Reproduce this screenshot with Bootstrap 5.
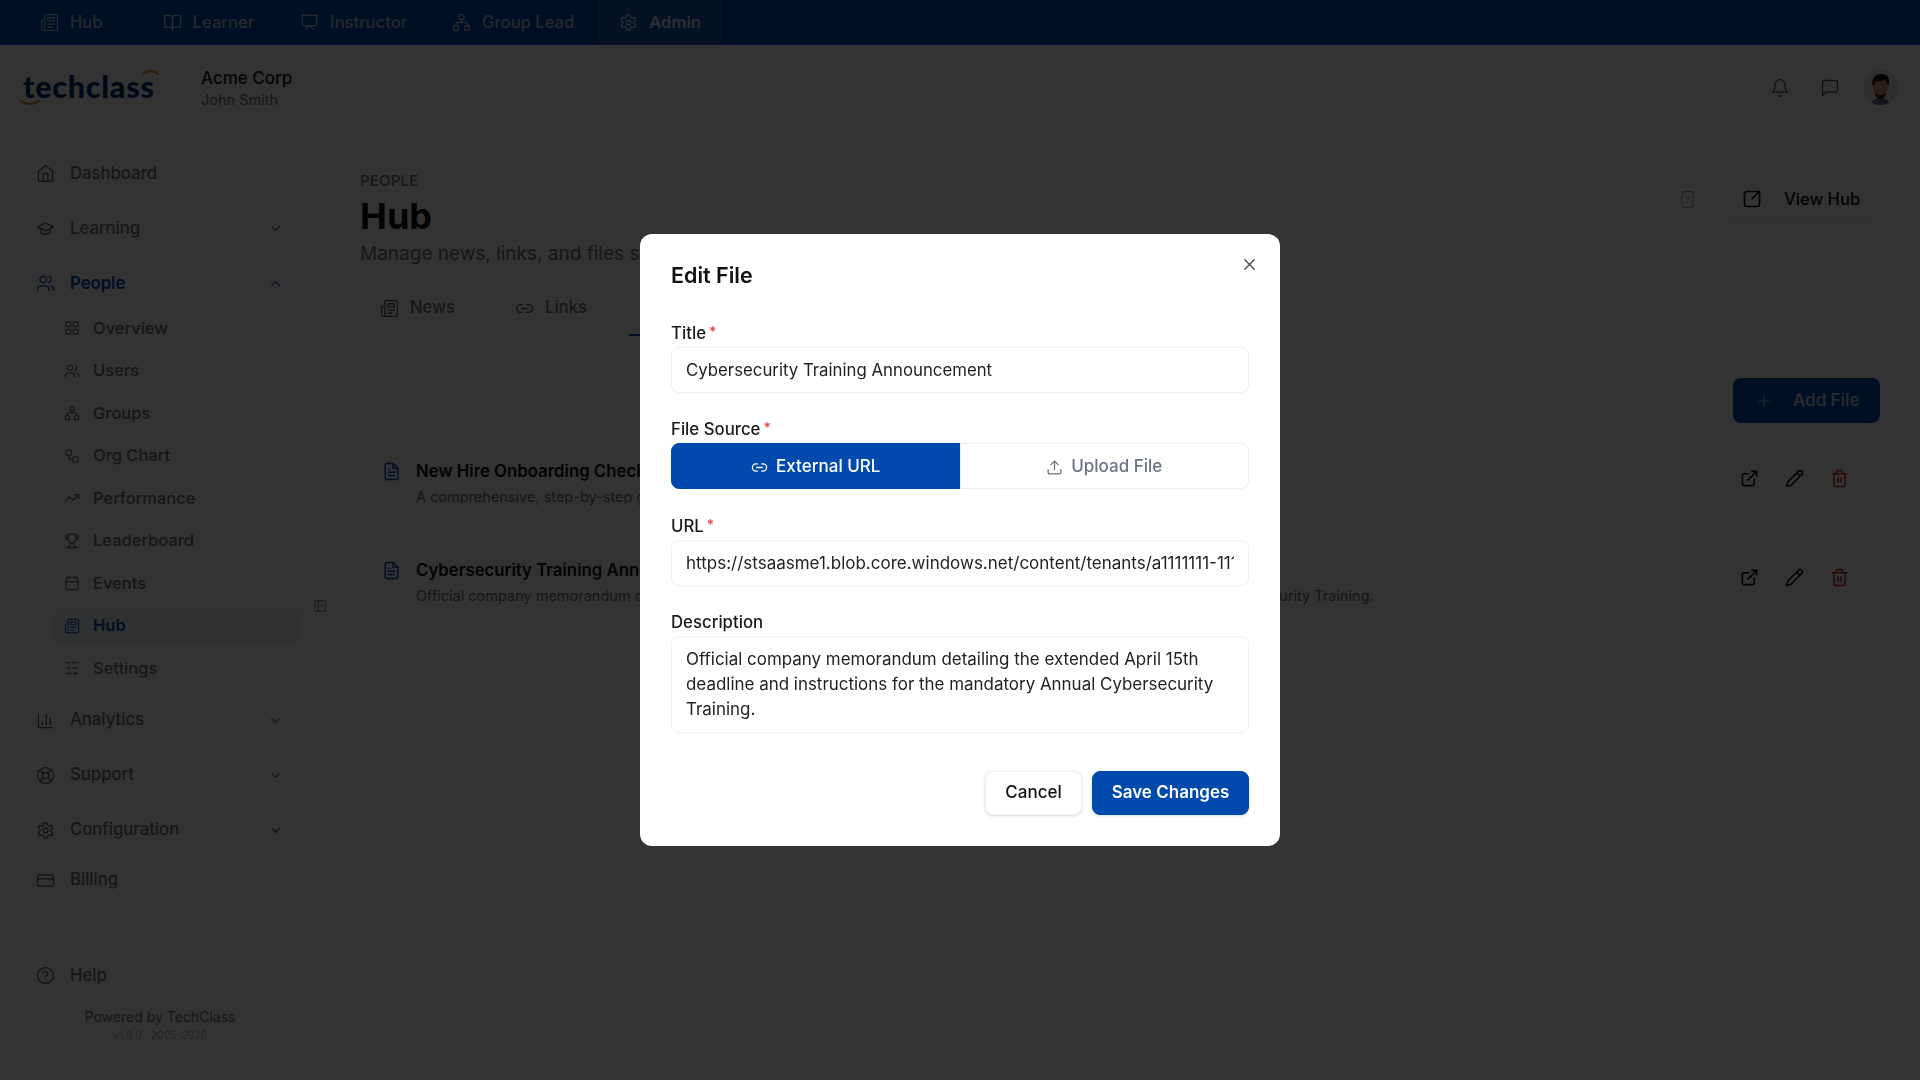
<!DOCTYPE html>
<html lang="en">
<head>
<meta charset="utf-8">
<title>Hub</title>
<link href="https://cdn.jsdelivr.net/npm/bootstrap@5.3.0/dist/css/bootstrap.min.css" rel="stylesheet">
<style>
:root{--brand:#004aad;--muted:#6b7280;--ink:#111827;}
html,body{height:100%;}
body{font-family:Inter,"Liberation Sans",sans-serif;background:#fff;color:var(--ink);overflow:hidden;font-size:16px;}
.ic{width:1em;height:1em;fill:none;stroke:currentColor;stroke-width:2;stroke-linecap:round;stroke-linejoin:round;flex:none;}
.app-shell{height:100vh;}
.topbar{height:45px;background:var(--brand);color:#fff;padding-left:19px;}
.topitem{height:45px;padding:0 21px;gap:11px;color:rgba(255,255,255,.72);font-weight:500;font-size:16.6px;white-space:nowrap;}
.topitem .ic{font-size:19px;stroke-width:1.6;}
.topitem.on{background:rgba(255,255,255,.1);color:rgba(255,255,255,.85);font-weight:600;}
.hdr{height:105px;padding:0 22px 20px 22px;}
.logo-wrap{width:179px;height:45px;position:relative;}
.logo-text{font-family:Lato,sans-serif;font-weight:900;font-size:30.5px;line-height:32px;color:#00317a;letter-spacing:.75px;display:block;margin-left:1px;margin-top:5px;}
.logo-swash{position:absolute;}
.org-block{margin-top:2px;}
.org-name{font-weight:500;font-size:17px;line-height:22px;color:var(--ink);}
.org-user{font-size:14.5px;line-height:20px;color:var(--muted);margin-top:1px;}
.hdr-ic{font-size:20px;color:#4b5563;stroke-width:1.6;}
.hdr-tools{gap:30px;}
.avatar-svg{width:35px;height:35px;border-radius:50%;flex:none;margin-left:-7px;}
.sidebar{width:360px;flex:none;position:relative;padding:1px 0 0 36px;height:930px;}
.sideinner{width:264px;}
.sitem{height:45px;margin-bottom:10px;gap:15px;color:var(--muted);font-size:16.7px;font-weight:500;}
.sitem .ic.lead{font-size:19px;stroke-width:1.6;color:#4b5563;}
.sitem .chev{font-size:15px;margin-left:auto;margin-right:17px;color:#4b5563;}
.sitem.open{color:var(--brand);font-weight:600;}
.sitem.open .ic{color:var(--brand);}
.subl{margin:1px 0 8px 17px;width:247px;}
.subitem{height:42.5px;padding-left:11px;gap:13px;color:var(--muted);font-size:16.5px;font-weight:500;border-radius:8px;}
.subitem .ic{font-size:16px;stroke-width:1.6;color:#4b5563;}
.subitem.on{background:#f1f5f9;color:var(--brand);font-weight:600;height:38px;margin:2.25px 0;}
.subitem.on .ic{color:var(--brand);}
.short{height:35px;}
.helpitem{position:absolute;left:36px;top:803px;width:264px;}
.foot-txt{position:absolute;left:36px;width:248px;top:857px;text-align:center;color:var(--muted);font-size:14px;line-height:20px;}
.foot-ver{font-size:10.5px;line-height:18px;color:#a8afba;}
.collapse-tg{position:absolute;left:313px;top:449px;font-size:14px;color:#6b7280;stroke-width:1.6;}
.mainc{flex:1;padding:21px 40px 0 0;min-width:0;}
.eyebrow{font-size:15px;line-height:20px;color:var(--muted);font-weight:500;letter-spacing:.2px;}
.ptitle{font-size:36px;font-weight:700;line-height:44px;margin:3px 0 2px;color:#111;}
.psub{font-size:19px;line-height:27px;color:var(--muted);}
.head-help{font-size:19px;color:#9ca3af;stroke-width:1.4;margin-right:27px;}
.viewbtn{width:156px;height:40px;border:1px solid #f3f4f6;border-radius:8px;background:#fff;color:#111;font-weight:500;font-size:16.6px;gap:22px;padding:0 0 0 17px;margin-top:8px;box-shadow:0 1px 3px rgba(0,0,0,.06);}
.viewbtn .ic{font-size:20px;stroke-width:2;}
.tabrow{height:56px;margin-top:13px;}
.tabcell{height:56px;color:var(--muted);font-size:16.7px;font-weight:500;gap:11px;padding:0 20px;}
.tabcell .ic{font-size:19px;stroke-width:1.6;color:#4b5563;}
.tabcell.on{color:var(--brand);border-bottom:2px solid var(--brand);}
.addbtn{width:147px;height:45px;background:var(--brand);color:#fff;border-radius:8px;border:0;font-size:17px;font-weight:600;gap:20px;padding:0 0 0 22px;margin-top:42px;}
.addbtn .ic{font-size:18px;opacity:.7;stroke-width:1.6;}
.addbtn span{opacity:.75;}
.filerow{height:99px;padding:20px 31px 0 22px;gap:15px;}
.filelist{margin-top:16px;}
.doc-ic{font-size:19px;color:var(--brand);stroke-width:1.8;margin-top:3px;}
.file-t{font-weight:600;font-size:16.8px;line-height:24px;color:#111;}
.file-d{font-size:14.5px;line-height:21px;color:var(--muted);margin-top:3px;white-space:nowrap;}
.acts{gap:26px;margin-top:10px;}
.acts .ic{font-size:19px;color:#111;}
.acts .ic.del{color:#dc2626;}
.modal-backdrop.show{opacity:.8;}
.dlg{--bs-modal-width:640px;max-width:640px;}
.dlg .modal-content{border:0;border-radius:12px;padding:26px 31px 31px;height:612px;color:#111;}
.m-title{font-size:21.5px;font-weight:600;line-height:30px;margin:0 0 30px;color:#111;}
.m-close{position:absolute;right:21px;top:21px;background:none;border:0;padding:0;line-height:0;color:#374151;font-size:19px;}
.m-close .ic{stroke-width:1.6;}
.flabel{font-size:16.8px;font-weight:500;line-height:24px;margin:0 0 2px;display:block;color:#1a1a1a;}
.req{color:#ef4444;margin-left:3px;font-size:14px;vertical-align:2px;}
.m-group{margin-bottom:24px;}
.m-group.tight{margin-bottom:23px;}
.m-input.form-control{height:46px;border:1px solid #eef0f3;border-radius:8px;padding:0 14px;font-size:16.8px;color:#222;box-shadow:none;}
.m-input.url-val{font-size:17px;}
.m-area.form-control{height:97px;border:1px solid #eef0f3;border-radius:8px;padding:10px 14px 8px;font-size:16.95px;line-height:25px;color:#222;resize:none;overflow:hidden;box-shadow:none;}
.seg{height:46px;}
.seg .btn{height:46px;border-radius:8px;font-size:17px;font-weight:500;display:flex;align-items:center;justify-content:center;gap:8px;flex:1 1 50%;padding-top:8px;padding-bottom:6px;}
.seg .btn .ic{font-size:17px;stroke-width:1.8;}
.seg-on.btn{background:var(--brand);border:1px solid var(--brand);color:#fff;}
.seg-off.btn{background:#fff;border:1px solid #eef0f3;color:#6b7280;}
.m-actions{margin-top:38px;gap:10px;}
.btn-cancel.btn{width:97px;height:44px;background:#fff;border:1px solid #f0f1f3;border-radius:8px;color:#111;font-size:17px;font-weight:500;box-shadow:0 1px 3px rgba(0,0,0,.15);padding:0;}
.btn-save.btn{width:157px;height:44px;background:var(--brand);border:1px solid var(--brand);border-radius:8px;color:#fff;font-size:17px;font-weight:600;box-shadow:0 1px 3px rgba(0,0,0,.15);padding:0;}
</style>
</head>
<body>
<svg width="0" height="0" class="position-absolute">
<defs>
<symbol id="i-news" viewBox="0 0 24 24"><path d="M4 22h16a2 2 0 0 0 2-2V4a2 2 0 0 0-2-2H8a2 2 0 0 0-2 2v16a2 2 0 0 1-2 2Zm0 0a2 2 0 0 1-2-2v-9c0-1.1.9-2 2-2h2"/><path d="M18 14h-8"/><path d="M15 18h-5"/><path d="M10 6h8v4h-8V6Z"/></symbol>
<symbol id="i-book" viewBox="0 0 24 24"><path d="M2 3h6a4 4 0 0 1 4 4v14a3 3 0 0 0-3-3H2z"/><path d="M22 3h-6a4 4 0 0 0-4 4v14a3 3 0 0 1 3-3h7z"/></symbol>
<symbol id="i-pres" viewBox="0 0 24 24"><path d="M2 3h20"/><path d="M21 3v11a2 2 0 0 1-2 2H5a2 2 0 0 1-2-2V3"/><path d="m7 21 5-5 5 5"/></symbol>
<symbol id="i-net" viewBox="0 0 24 24"><rect x="16" y="16" width="6" height="6" rx="1"/><rect x="2" y="16" width="6" height="6" rx="1"/><rect x="9" y="2" width="6" height="6" rx="1"/><path d="M5 16v-3a1 1 0 0 1 1-1h12a1 1 0 0 1 1 1v3"/><path d="M12 12V8"/></symbol>
<symbol id="i-gear" viewBox="0 0 24 24"><path d="M12.22 2h-.44a2 2 0 0 0-2 2v.18a2 2 0 0 1-1 1.73l-.43.25a2 2 0 0 1-2 0l-.15-.08a2 2 0 0 0-2.73.73l-.22.38a2 2 0 0 0 .73 2.73l.15.1a2 2 0 0 1 1 1.72v.51a2 2 0 0 1-1 1.74l-.15.09a2 2 0 0 0-.73 2.73l.22.38a2 2 0 0 0 2.73.73l.15-.08a2 2 0 0 1 2 0l.43.25a2 2 0 0 1 1 1.73V20a2 2 0 0 0 2 2h.44a2 2 0 0 0 2-2v-.18a2 2 0 0 1 1-1.73l.43-.25a2 2 0 0 1 2 0l.15.08a2 2 0 0 0 2.73-.73l.22-.39a2 2 0 0 0-.73-2.73l-.15-.08a2 2 0 0 1-1-1.74v-.5a2 2 0 0 1 1-1.74l.15-.09a2 2 0 0 0 .73-2.73l-.22-.38a2 2 0 0 0-2.73-.73l-.15.08a2 2 0 0 1-2 0l-.43-.25a2 2 0 0 1-1-1.73V4a2 2 0 0 0-2-2z"/><circle cx="12" cy="12" r="3"/></symbol>
<symbol id="i-home" viewBox="0 0 24 24"><path d="m3 9 9-7 9 7v11a2 2 0 0 1-2 2H5a2 2 0 0 1-2-2z"/><path d="M9 22V12h6v10"/></symbol>
<symbol id="i-cap" viewBox="0 0 24 24"><path d="M22 10 12 5 2 10l10 5 10-5z"/><path d="M6 12v5c3 3 9 3 12 0v-5"/></symbol>
<symbol id="i-users" viewBox="0 0 24 24"><path d="M16 21v-2a4 4 0 0 0-4-4H6a4 4 0 0 0-4 4v2"/><circle cx="9" cy="7" r="4"/><path d="M22 21v-2a4 4 0 0 0-3-3.87"/><path d="M16 3.13a4 4 0 0 1 0 7.75"/></symbol>
<symbol id="i-grid" viewBox="0 0 24 24"><rect x="3" y="3" width="7" height="7" rx="1"/><rect x="14" y="3" width="7" height="7" rx="1"/><rect x="14" y="14" width="7" height="7" rx="1"/><rect x="3" y="14" width="7" height="7" rx="1"/></symbol>
<symbol id="i-flow" viewBox="0 0 24 24"><rect x="3" y="3" width="8" height="8" rx="2"/><path d="M7 11v4a2 2 0 0 0 2 2h4"/><rect x="13" y="13" width="8" height="8" rx="2"/></symbol>
<symbol id="i-trend" viewBox="0 0 24 24"><path d="m22 7-8.5 8.5-5-5L2 17"/><path d="M16 7h6v6"/></symbol>
<symbol id="i-trophy" viewBox="0 0 24 24"><path d="M6 9H4.5a2.5 2.5 0 0 1 0-5H6"/><path d="M18 9h1.5a2.5 2.5 0 0 0 0-5H18"/><path d="M4 22h16"/><path d="M10 14.66V17c0 .55-.47.98-.97 1.21C7.85 18.75 7 20.24 7 22"/><path d="M14 14.66V17c0 .55.47.98.97 1.21C16.15 18.75 17 20.24 17 22"/><path d="M18 2H6v7a6 6 0 0 0 12 0V2Z"/></symbol>
<symbol id="i-cal" viewBox="0 0 24 24"><rect x="3" y="4" width="18" height="18" rx="2"/><path d="M16 2v4"/><path d="M8 2v4"/><path d="M3 10h18"/></symbol>
<symbol id="i-sliders" viewBox="0 0 24 24"><path d="M21 4h-7"/><path d="M10 4H3"/><path d="M21 12h-9"/><path d="M8 12H3"/><path d="M21 20h-5"/><path d="M12 20H3"/><path d="M14 2v4"/><path d="M8 10v4"/><path d="M16 18v4"/></symbol>
<symbol id="i-bars" viewBox="0 0 24 24"><path d="M3 3v18h18"/><path d="M18 17V9"/><path d="M13 17V5"/><path d="M8 17v-3"/></symbol>
<symbol id="i-buoy" viewBox="0 0 24 24"><circle cx="12" cy="12" r="10"/><circle cx="12" cy="12" r="4"/><path d="m4.93 4.93 4.24 4.24"/><path d="m14.83 9.17 4.24-4.24"/><path d="m14.83 14.83 4.24 4.24"/><path d="m9.17 14.83-4.24 4.24"/></symbol>
<symbol id="i-card" viewBox="0 0 24 24"><rect x="2" y="5" width="20" height="14" rx="2"/><path d="M2 10h20"/></symbol>
<symbol id="i-help" viewBox="0 0 24 24"><circle cx="12" cy="12" r="10"/><path d="M9.09 9a3 3 0 0 1 5.83 1c0 2-3 3-3 3"/><path d="M12 17h.01"/></symbol>
<symbol id="i-down" viewBox="0 0 24 24"><path d="m6 9 6 6 6-6"/></symbol>
<symbol id="i-up" viewBox="0 0 24 24"><path d="m18 15-6-6-6 6"/></symbol>
<symbol id="i-panel" viewBox="0 0 24 24"><rect x="3" y="3" width="18" height="18" rx="1"/><path d="M9 3v18"/><path d="m16 9-3 3 3 3"/></symbol>
<symbol id="i-bell" viewBox="0 0 24 24"><path d="M6 8a6 6 0 0 1 12 0c0 7 3 9 3 9H3s3-2 3-9"/><path d="M10.3 21a1.94 1.94 0 0 0 3.4 0"/></symbol>
<symbol id="i-msg" viewBox="0 0 24 24"><path d="M21 15a2 2 0 0 1-2 2H7l-4 4V5a2 2 0 0 1 2-2h14a2 2 0 0 1 2 2z"/></symbol>
<symbol id="i-ext" viewBox="0 0 24 24"><path d="M15 3h6v6"/><path d="M10 14 21 3"/><path d="M18 13v6a2 2 0 0 1-2 2H5a2 2 0 0 1-2-2V8a2 2 0 0 1 2-2h6"/></symbol>
<symbol id="i-sqext" viewBox="0 0 24 24"><path d="M13 3H6a3 3 0 0 0-3 3v12a3 3 0 0 0 3 3h12a3 3 0 0 0 3-3v-7"/><path d="M15 3h6v6"/><path d="m21 3-9 9"/></symbol>
<symbol id="i-pen" viewBox="0 0 24 24"><path d="M17 3a2.85 2.83 0 1 1 4 4L7.5 20.5 2 22l1.5-5.5Z"/><path d="m15 5 4 4"/></symbol>
<symbol id="i-trash" viewBox="0 0 24 24"><path d="M3 6h18"/><path d="M19 6v14c0 1-1 2-2 2H7c-1 0-2-1-2-2V6"/><path d="M8 6V4c0-1 1-2 2-2h4c1 0 2 1 2 2v2"/><path d="M10 11v6"/><path d="M14 11v6"/></symbol>
<symbol id="i-doc" viewBox="0 0 24 24"><path d="M14.5 2H6a2 2 0 0 0-2 2v16a2 2 0 0 0 2 2h12a2 2 0 0 0 2-2V7.5L14.5 2z"/><path d="M14 2v6h6"/><path d="M16 13H8"/><path d="M16 17H8"/><path d="M10 9H8"/></symbol>
<symbol id="i-link" viewBox="0 0 24 24"><path d="M9 17H7A5 5 0 0 1 7 7h2"/><path d="M15 7h2a5 5 0 1 1 0 10h-2"/><path d="M8 12h8"/></symbol>
<symbol id="i-up2" viewBox="0 0 24 24"><path d="M21 15v4a2 2 0 0 1-2 2H5a2 2 0 0 1-2-2v-4"/><path d="M17 8 12 3 7 8"/><path d="M12 3v12"/></symbol>
<symbol id="i-plus" viewBox="0 0 24 24"><path d="M5 12h14"/><path d="M12 5v14"/></symbol>
<symbol id="i-x" viewBox="0 0 24 24"><path d="M18 6 6 18"/><path d="m6 6 12 12"/></symbol>
<symbol id="i-dq" viewBox="0 0 24 24"><rect x="5" y="2" width="14" height="20" rx="3"/><path d="M10 9.5a2 2 0 0 1 4 .3c0 1.4-2 1.7-2 3"/><path d="M12 16.5h.01"/></symbol>
</defs>
</svg>

<div class="app-shell d-flex flex-column">
  <nav class="topbar d-flex align-items-center">
    <div class="topitem d-flex align-items-center" style="margin-right:18px"><svg class="ic"><use href="#i-news"/></svg>Hub</div>
    <div class="topitem d-flex align-items-center" style="margin-right:4px"><svg class="ic"><use href="#i-book"/></svg>Learner</div>
    <div class="topitem d-flex align-items-center" style="margin-right:3px"><svg class="ic"><use href="#i-pres"/></svg>Instructor</div>
    <div class="topitem d-flex align-items-center" style="margin-right:3px"><svg class="ic"><use href="#i-net"/></svg>Group Lead</div>
    <div class="topitem on d-flex align-items-center"><svg class="ic"><use href="#i-gear"/></svg>Admin</div>
  </nav>

  <header class="hdr d-flex align-items-center">
    <div class="logo-wrap">
      <span class="logo-text">techclass</span>
      <svg class="logo-swash" style="left:-2px;top:35px" width="20" height="6" viewBox="0 0 20 6"><path d="M1 1c5 4 13 4 18 0" fill="none" stroke="#d9961f" stroke-width="2.2" stroke-linecap="round"/></svg>
      <svg class="logo-swash" style="left:120px;top:4px" width="17" height="6" viewBox="0 0 17 6"><path d="M1 5c4-4 11-4 15 0" fill="none" stroke="#d9961f" stroke-width="2" stroke-linecap="round"/></svg>
    </div>
    <div class="org-block">
      <div class="org-name">Acme Corp</div>
      <div class="org-user">John Smith</div>
    </div>
    <div class="hdr-tools ms-auto d-flex align-items-center">
      <svg class="ic hdr-ic"><use href="#i-bell"/></svg>
      <svg class="ic hdr-ic"><use href="#i-msg"/></svg>
      <svg class="avatar-svg" viewBox="0 0 36 36"><rect width="36" height="36" fill="#e6e6e6"/><path d="M8 36c1-5 5-7 10-7s9 2 10 7z" fill="#5d6b80"/><ellipse cx="18" cy="18" rx="7.5" ry="10" fill="#c99a7c"/><path d="M10 17C8 7 14 4 19 4s10 3 7 13c-1-3-2-6-4-7-3 2-8 1-9 2-1 1-2 3-3 5z" fill="#1a1410"/><path d="M12 22c2 5 10 5 12 0-1 6-3 8-6 8s-5-2-6-8z" fill="#33241a"/></svg>
    </div>
  </header>

  <div class="d-flex flex-grow-1" style="min-height:0">
    <aside class="sidebar">
      <div class="sideinner">
        <div class="sitem d-flex align-items-center"><svg class="ic lead"><use href="#i-home"/></svg>Dashboard</div>
        <div class="sitem d-flex align-items-center"><svg class="ic lead"><use href="#i-cap"/></svg>Learning<svg class="ic chev"><use href="#i-down"/></svg></div>
        <div class="sitem open d-flex align-items-center mb-0"><svg class="ic lead"><use href="#i-users"/></svg>People<svg class="ic chev"><use href="#i-up"/></svg></div>
        <div class="subl">
          <div class="subitem d-flex align-items-center"><svg class="ic"><use href="#i-grid"/></svg>Overview</div>
          <div class="subitem d-flex align-items-center"><svg class="ic"><use href="#i-users"/></svg>Users</div>
          <div class="subitem d-flex align-items-center"><svg class="ic"><use href="#i-net"/></svg>Groups</div>
          <div class="subitem d-flex align-items-center"><svg class="ic"><use href="#i-flow"/></svg>Org Chart</div>
          <div class="subitem d-flex align-items-center"><svg class="ic"><use href="#i-trend"/></svg>Performance</div>
          <div class="subitem d-flex align-items-center"><svg class="ic"><use href="#i-trophy"/></svg>Leaderboard</div>
          <div class="subitem d-flex align-items-center"><svg class="ic"><use href="#i-cal"/></svg>Events</div>
          <div class="subitem on d-flex align-items-center"><svg class="ic"><use href="#i-news"/></svg>Hub</div>
          <div class="subitem d-flex align-items-center"><svg class="ic"><use href="#i-sliders"/></svg>Settings</div>
        </div>
        <div class="sitem d-flex align-items-center"><svg class="ic lead"><use href="#i-bars"/></svg>Analytics<svg class="ic chev"><use href="#i-down"/></svg></div>
        <div class="sitem d-flex align-items-center"><svg class="ic lead"><use href="#i-buoy"/></svg>Support<svg class="ic chev"><use href="#i-down"/></svg></div>
        <div class="sitem d-flex align-items-center"><svg class="ic lead"><use href="#i-gear"/></svg>Configuration<svg class="ic chev"><use href="#i-down"/></svg></div>
        <div class="sitem short d-flex align-items-center"><svg class="ic lead"><use href="#i-card"/></svg>Billing</div>
      </div>
      <svg class="ic collapse-tg"><use href="#i-panel"/></svg>
      <div class="sitem helpitem d-flex align-items-center"><svg class="ic lead"><use href="#i-help"/></svg>Help</div>
      <div class="foot-txt">Powered by TechClass<div class="foot-ver">v1.0.0 · 2025-2026</div></div>
    </aside>

    <main class="mainc">
      <div class="d-flex justify-content-between align-items-start">
        <div>
          <div class="eyebrow">PEOPLE</div>
          <div class="ptitle">Hub</div>
          <div class="psub">Manage news, links, and files shared with your organization.</div>
        </div>
        <div class="d-flex align-items-center">
          <svg class="ic head-help" style="margin-top:8px"><use href="#i-dq"/></svg>
          <div class="viewbtn d-flex align-items-center"><svg class="ic"><use href="#i-sqext"/></svg>View Hub</div>
        </div>
      </div>
      <div class="tabrow d-flex align-items-center">
        <div class="tabcell d-flex align-items-center"><svg class="ic"><use href="#i-news"/></svg>News</div>
        <div class="tabcell d-flex align-items-center" style="margin-left:20px"><svg class="ic"><use href="#i-link"/></svg>Links</div>
        <div class="tabcell on d-flex align-items-center" style="margin-left:22px"><svg class="ic"><use href="#i-doc"/></svg>Files</div>
      </div>
      <div class="d-flex justify-content-end">
        <div class="addbtn d-flex align-items-center"><svg class="ic"><use href="#i-plus"/></svg><span>Add File</span></div>
      </div>
      <div class="filelist">
        <div class="filerow d-flex align-items-start">
          <svg class="ic doc-ic"><use href="#i-doc"/></svg>
          <div class="flex-grow-1">
            <div class="file-t">New Hire Onboarding Checklist</div>
            <div class="file-d">A comprehensive, step-by-step guide for new hires.</div>
          </div>
          <div class="acts d-flex"><svg class="ic"><use href="#i-ext"/></svg><svg class="ic"><use href="#i-pen"/></svg><svg class="ic del"><use href="#i-trash"/></svg></div>
        </div>
        <div class="filerow d-flex align-items-start">
          <svg class="ic doc-ic"><use href="#i-doc"/></svg>
          <div class="flex-grow-1">
            <div class="file-t">Cybersecurity Training Announcement</div>
            <div class="file-d">Official company memorandum detailing the extended April 15th deadline and instructions for the mandatory Annual Cybersecurity Training.</div>
          </div>
          <div class="acts d-flex"><svg class="ic"><use href="#i-ext"/></svg><svg class="ic"><use href="#i-pen"/></svg><svg class="ic del"><use href="#i-trash"/></svg></div>
        </div>
      </div>
    </main>
  </div>
</div>

<div class="modal-backdrop show"></div>
<div class="modal d-block" tabindex="-1" style="overflow:hidden">
  <div class="modal-dialog modal-dialog-centered dlg">
    <div class="modal-content">
      <h2 class="m-title">Edit File</h2>
      <button type="button" class="m-close" aria-label="Close"><svg class="ic"><use href="#i-x"/></svg></button>
      <div class="m-group tight">
        <label class="flabel">Title<span class="req">*</span></label>
        <input class="form-control m-input" type="text" value="Cybersecurity Training Announcement">
      </div>
      <div class="m-group">
        <label class="flabel">File Source<span class="req">*</span></label>
        <div class="btn-group seg w-100">
          <button type="button" class="btn seg-on"><svg class="ic"><use href="#i-link"/></svg>External URL</button>
          <button type="button" class="btn seg-off"><svg class="ic"><use href="#i-up2"/></svg>Upload File</button>
        </div>
      </div>
      <div class="m-group">
        <label class="flabel">URL<span class="req">*</span></label>
        <input class="form-control m-input url-val" type="text" value="https://stsaasme1.blob.core.windows.net/content/tenants/a1111111-1111-1111-1111-111111111111/files/announcement.pdf">
      </div>
      <div>
        <label class="flabel">Description</label>
        <textarea class="form-control m-area" rows="3">Official company memorandum detailing the extended April 15th deadline and instructions for the mandatory Annual Cybersecurity Training.</textarea>
      </div>
      <div class="m-actions d-flex justify-content-end">
        <button type="button" class="btn btn-cancel">Cancel</button>
        <button type="button" class="btn btn-save">Save Changes</button>
      </div>
    </div>
  </div>
</div>
<script src="https://cdn.jsdelivr.net/npm/bootstrap@5.3.0/dist/js/bootstrap.bundle.min.js"></script>
</body>
</html>
